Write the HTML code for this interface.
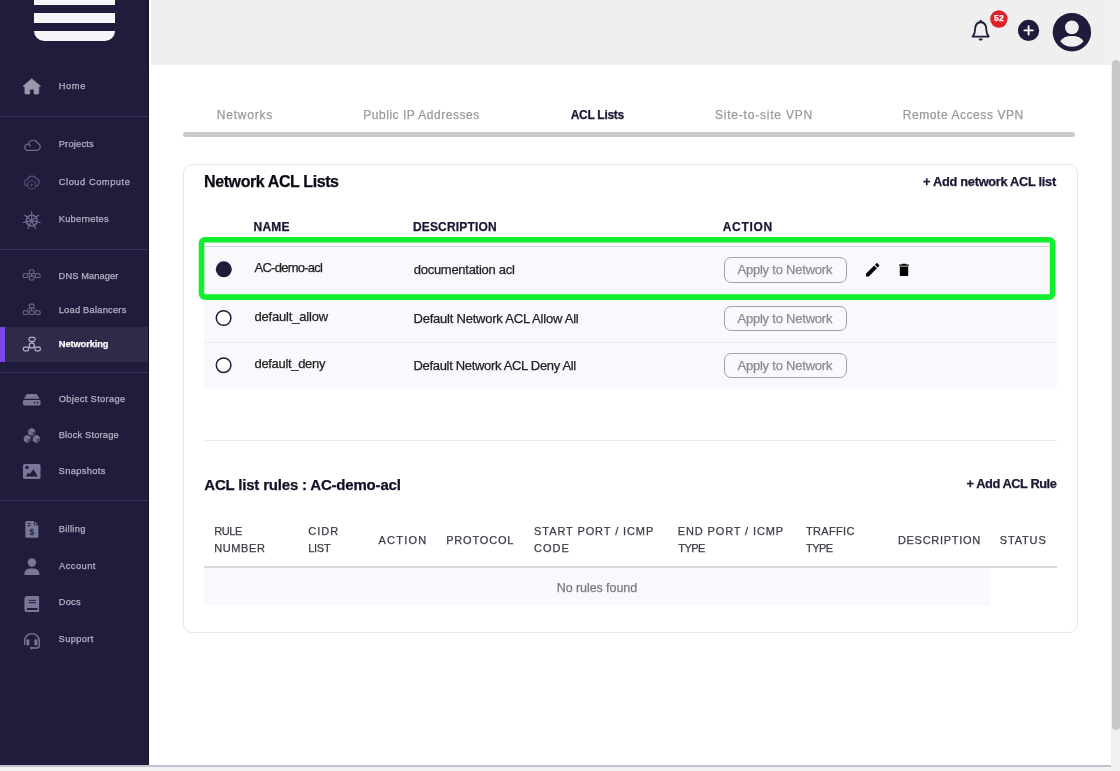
<!DOCTYPE html>
<html><head><meta charset="utf-8"><title>Network ACL Lists</title>
<style>
*{box-sizing:border-box;margin:0;padding:0}
html,body{width:1120px;height:771px;overflow:hidden;background:#fff;font-family:"Liberation Sans",sans-serif;color:#1f1b3a}
.a{position:absolute}
.t{position:absolute;white-space:nowrap;line-height:1.2;-webkit-text-stroke:.25px currentColor}
#txt{position:absolute;left:0;top:0;width:1120px;height:771px;will-change:transform}
.bl{display:inline-block;width:0;height:0}
#sidebar{left:0;top:0;width:149px;height:765px;background:#211c3b;box-shadow:inset -1px 0 0 #15112a}
#logo div{position:absolute;left:34px;width:81px;background:#f4f5f9}
.sep{position:absolute;left:0;width:148px;height:1px;background:#37325a}
#active{left:0;top:327px;width:148px;height:35px;background:#2d2a4a}
#active:before{content:"";position:absolute;left:0;top:0;width:5px;height:100%;background:#7a45e6}
#header{left:151px;top:0;width:969px;height:65px;background:#efefef}
#scroll{left:1111px;top:0;width:9px;height:771px;background:#f1f1f1}
#thumb{left:1112.3px;top:59.5px;width:8px;height:670px;border-radius:4px;background:#c8c8c8}
#bottom{left:0;top:765px;width:1111px;height:6px;background:#f2f2f0;border-top:2px solid #c2c1cf}
#tabline{left:183px;top:132px;width:892px;height:5px;border-radius:3px;background:#cacaca}
#card{left:183px;top:164px;width:895px;height:469px;border:1px solid #e6e6ea;border-radius:9px;background:#fff}
.row{position:absolute;left:204px;width:853px;background:#f8f8fd}
.btn{position:absolute;left:723.5px;width:123.5px;height:25px;border:1px solid #a2a2a2;border-radius:7px;background:transparent}
.radio{position:absolute;left:215.5px;width:16px;height:16px;border-radius:50%;border:1.7px solid #1f1b3a;background:#fff}
.radio.on{background:#1f1b3a}
svg{position:absolute;overflow:visible}
</style></head><body>
<div class="a" id="sidebar">
 <div id="logo">
  <div style="top:0;height:4.5px"></div>
  <div style="top:13px;height:9.5px"></div>
  <div style="top:31px;height:10px;border-radius:0 0 11px 11px"></div>
 </div>
 <div class="sep" style="top:116px"></div>
 <div class="sep" style="top:249px"></div>
 <div class="a" id="active"></div>
 <div class="sep" style="top:372px"></div>
 <div class="sep" style="top:499.5px"></div>
</div>
<div class="a" id="header"></div>
<div class="a" id="scroll"></div>
<div class="a" id="thumb"></div>
<div class="a" id="bottom"></div>
<div class="a" id="tabline"></div>
<div class="a" id="card"></div>

<div class="row" style="top:245.5px;height:48.5px;width:850px;border-top:1.5px solid #d0d0d6"></div>
<div class="row" style="top:294px;height:48px"></div>
<div class="row" style="top:342px;height:47px;border-top:1px solid #ebebf1"></div>
<svg style="left:0;top:0" width="1120" height="320" viewBox="0 0 1120 320"><rect x="201.5" y="239.7" width="851.1" height="57.4" rx="3.6" fill="none" stroke="#10ee2e" stroke-width="5.6"/></svg>

<div class="btn" style="top:257px;height:26px"></div>
<div class="btn" style="top:306px"></div>
<div class="btn" style="top:353px"></div>

<div class="a" style="left:204px;top:439.5px;width:853px;height:1px;background:#ececf0"></div>
<div class="a" style="left:204px;top:566px;width:853px;height:2px;background:#d9d9de"></div>
<div class="a" style="left:204px;top:568px;width:786.4px;height:38px;background:#f8f8fd"></div>
<svg style="left:0;top:0" width="1120" height="771" viewBox="0 0 1120 771">
<g fill="none" stroke="#1f1b3a" stroke-width="1.8" stroke-linejoin="round" stroke-linecap="round">
<path d="M972.6 36.6 L988.8 36.6 C987 34.5 986.3 32.5 986.3 29.5 C986.3 25.5 984.5 22.5 980.7 22 C976.9 22.5 975.1 25.5 975.1 29.5 C975.1 32.5 974.4 34.5 972.6 36.6 Z"/>
<path d="M980.7 22 L980.7 20.6"/></g>
<path d="M978.6 38.6 h4.2 a2.1 2.1 0 0 1 -4.2 0z" fill="#1f1b3a"/>
<circle cx="998.9" cy="19" r="8.7" fill="#e02029"/>
<circle cx="1028.6" cy="30.4" r="10.6" fill="#1f1b3a"/>
<path d="M1024.4 30.4h8.4M1028.6 26.2v8.4" stroke="#fff" stroke-width="1.9" stroke-linecap="round"/>
<circle cx="1071.9" cy="32.2" r="19.2" fill="#1f1b3a"/>
<circle cx="1071.9" cy="27.4" r="6.9" fill="#efefef"/>
<path d="M1060.3 41.5 C1062 37.8 1066.5 36 1071.9 36 C1077.3 36 1081.8 37.8 1083.5 41.5 C1080.5 45 1076.5 46.8 1071.9 46.8 C1067.3 46.8 1063.3 45 1060.3 41.5Z" fill="#efefef"/>
<path d="M31.8 78.7 L40.6 86.2 L38.8 87.1 V93.3 a.8 .8 0 0 1 -.8 .8 H34 V89.3 H29.8 V94.1 H25.7 a.8 .8 0 0 1 -.8 -.8 V87.1 L23 86.2 Z" fill="#9a98ac" stroke="#9a98ac" stroke-width=".6" stroke-linejoin="round"/>
<path d="M27 150.4 H36.7 A3.7 3.7 0 0 0 37.7 143.2 A5 5 0 0 0 28.3 144 A3.3 3.3 0 0 0 27 150.4 Z M28.3 144.1 A3.3 3.3 0 0 1 30.4 146.2" fill="none" stroke="#6f6c90" stroke-width="1.2" stroke-linejoin="round" stroke-linecap="round"/>
<path d="M27.6 186.1 A3.3 3.3 0 0 1 27.5 179.5 A4.9 4.9 0 0 1 36.6 178.9 A3.7 3.7 0 0 1 36 186.1" fill="none" stroke="#57537a" stroke-width="1.1" stroke-linecap="round"/>
<circle cx="31.6" cy="184.9" r="4.1" fill="#211c3b" stroke="#57537a" stroke-width="1"/>
<path d="M30 184.9h3.2M31.6 183.3v3.2" stroke="#57537a" stroke-width=".8"/>
<circle cx="31.7" cy="220.6" r="5.4" fill="none" stroke="#6f6c90" stroke-width="1.6"/>
<circle cx="31.7" cy="220.6" r="1.3" fill="#6f6c90"/>
<path d="M31.70 219.40L31.70 211.90M32.64 219.85L38.50 215.18M32.87 220.87L40.18 222.54M32.22 221.68L35.47 228.44M31.18 221.68L27.93 228.44M30.53 220.87L23.22 222.54M30.76 219.85L24.90 215.18" stroke="#6f6c90" stroke-width="1.2" stroke-linecap="round"/>
<rect x="29.20" y="270.00" width="4.8" height="3.8" rx="1.1" fill="none" stroke="#6f6c90" stroke-width="1.05"/>
<rect x="23.20" y="273.80" width="4.8" height="3.8" rx="1.1" fill="none" stroke="#6f6c90" stroke-width="1.05"/>
<rect x="35.30" y="273.80" width="4.8" height="3.8" rx="1.1" fill="none" stroke="#6f6c90" stroke-width="1.05"/>
<rect x="29.20" y="276.10" width="4.8" height="3.8" rx="1.1" fill="none" stroke="#6f6c90" stroke-width="1.05"/>
<path d="M31.6 273.8V276.1M29.6 273.6L28 274.6M33.6 273.6L35.3 274.6" stroke="#6f6c90" stroke-width="1" />
<rect x="29.20" y="304.10" width="4.8" height="3.8" rx="1.1" fill="none" stroke="#6f6c90" stroke-width="1.05"/>
<rect x="23.10" y="310.70" width="5" height="3.8" rx="1.6" fill="none" stroke="#6f6c90" stroke-width="1.05"/>
<rect x="29.10" y="310.70" width="5" height="3.8" rx="1.6" fill="none" stroke="#6f6c90" stroke-width="1.05"/>
<rect x="35.20" y="310.70" width="5" height="3.8" rx="1.6" fill="none" stroke="#6f6c90" stroke-width="1.05"/>
<path d="M31.6 307.9V310.7M30.2 307.9L26.6 310.7M33 307.9L36.7 310.7" stroke="#6f6c90" stroke-width="1"/>
<rect x="28.9" y="337.4" width="6.2" height="4" rx="1.8" fill="none" stroke="#b6b4d2" stroke-width="1.2"/>
<circle cx="31.8" cy="345.4" r="2.5" fill="none" stroke="#b6b4d2" stroke-width="1.2"/>
<rect x="23.4" y="347.2" width="5.3" height="3.6" rx="1.2" fill="none" stroke="#b6b4d2" stroke-width="1.2"/>
<rect x="35" y="347.2" width="5.3" height="3.6" rx="1.2" fill="none" stroke="#b6b4d2" stroke-width="1.2"/>
<path d="M31.9 341.6V342.8M29.7 346.8L28.6 347.5M33.9 346.8L35 347.5" stroke="#b6b4d2" stroke-width="1.2"/>
<path d="M27.3 394.1 H36.2 a1 1 0 0 1 .8 .5 L39.6 398.7 H23.9 L26.5 394.6 a1 1 0 0 1 .8 -.5Z" fill="#7a7798"/>
<rect x="23" y="399.9" width="17.5" height="5.5" rx="1.3" fill="#7a7798"/>
<circle cx="34.6" cy="402.6" r=".85" fill="#211c3b"/><circle cx="37.6" cy="402.6" r=".85" fill="#211c3b"/>
<polygon points="31.70,427.60 35.60,429.85 35.60,434.35 31.70,436.60 27.80,434.35 27.80,429.85" fill="#7a7798" stroke="#211c3b" stroke-width=".9" stroke-linejoin="round"/><polygon points="32.58,432.61 34.72,431.37 34.72,433.84 32.58,435.08" fill="#211c3b" opacity=".7"/><path d="M31.7 432.1L28.40 430.20M31.7 432.1V435.90" stroke="#211c3b" stroke-width=".5" opacity=".6"/>
<polygon points="27.20,434.40 31.10,436.65 31.10,441.15 27.20,443.40 23.30,441.15 23.30,436.65" fill="#7a7798" stroke="#211c3b" stroke-width=".9" stroke-linejoin="round"/><polygon points="28.08,439.41 30.22,438.17 30.22,440.64 28.08,441.88" fill="#211c3b" opacity=".7"/><path d="M27.2 438.9L23.90 437.00M27.2 438.9V442.70" stroke="#211c3b" stroke-width=".5" opacity=".6"/>
<polygon points="36.30,434.40 40.20,436.65 40.20,441.15 36.30,443.40 32.40,441.15 32.40,436.65" fill="#7a7798" stroke="#211c3b" stroke-width=".9" stroke-linejoin="round"/><polygon points="37.18,439.41 39.32,438.17 39.32,440.64 37.18,441.88" fill="#211c3b" opacity=".7"/><path d="M36.3 438.9L33.00 437.00M36.3 438.9V442.70" stroke="#211c3b" stroke-width=".5" opacity=".6"/>
<rect x="23" y="463.9" width="17.5" height="15.1" rx="1.8" fill="#7a7798"/>
<circle cx="27" cy="467.4" r="1.7" fill="#211c3b"/>
<path d="M25.7 476.4 L28.3 472.5 L29.6 474.3 L33.4 469.2 L37.9 476.4 Z" fill="#211c3b"/>
<path d="M26.8 520.9 H34.4 L38.4 524.9 V536.2 a1.5 1.5 0 0 1 -1.5 1.5 H26.8 a1.5 1.5 0 0 1 -1.5 -1.5 V522.4 a1.5 1.5 0 0 1 1.5 -1.5Z" fill="#7a7798"/>
<path d="M34.4 520.9 V524.9 H38.4" fill="none" stroke="#211c3b" stroke-width=".9"/>
<path d="M27.6 523.6h3M27.6 525.6h3" stroke="#211c3b" stroke-width=".9"/>
<text x="31.9" y="535.2" font-family="Liberation Sans, sans-serif" font-size="8.5" font-weight="bold" fill="#211c3b" text-anchor="middle">$</text>
<circle cx="31.9" cy="562.5" r="4.2" fill="#7a7798"/>
<path d="M24.4 575 V573.6 a5.2 5.2 0 0 1 5.2 -5.2 H34.2 a5.2 5.2 0 0 1 5.2 5.2 V575 Z" fill="#7a7798"/>
<path d="M27.6 595.9 H38.2 a.9 .9 0 0 1 .9 .9 V611.2 a.9 .9 0 0 1 -.9 .9 H27.6 a3.2 3.2 0 0 1 -3.2 -3.2 V599.1 a3.2 3.2 0 0 1 3.2 -3.2Z" fill="#7a7798"/>
<path d="M28.8 600.4H36M28.8 602.7H36" stroke="#211c3b" stroke-width="1"/>
<path d="M27.8 607.9 H37.6 V610.1 H27.8 a1.1 1.1 0 0 1 0 -2.2Z" fill="#211c3b"/>
<path d="M24.6 644.2 V640.9 a7.3 7.3 0 0 1 14.6 0 V645.4 a2.6 2.6 0 0 1 -2.6 2.6 H32.6" fill="none" stroke="#7a7798" stroke-width="1.4" stroke-linecap="round"/>
<rect x="26.4" y="639.2" width="2.9" height="6.3" rx="1.3" fill="#7a7798"/><rect x="34.5" y="639.2" width="2.9" height="6.3" rx="1.3" fill="#7a7798"/>
<circle cx="31.5" cy="648.1" r="1.4" fill="#7a7798"/>
<g transform="translate(863.78 260.9) scale(.74)" fill="#000"><path d="M3 17.25V21h3.75L17.81 9.94l-3.75-3.75L3 17.25zM20.71 7.04a.996.996 0 0 0 0-1.41l-2.34-2.34a.996.996 0 0 0-1.41 0l-1.83 1.83 3.75 3.75 1.83-1.83z"/></g>
<g transform="translate(895.6 261.65) scale(.70 .685)" fill="#000"><path d="M6 19c0 1.1.9 2 2 2h8c1.1 0 2-.9 2-2V7H6v12zM19 4h-3.5l-1-1h-5l-1 1H5v2h14V4z"/></g>
<circle cx="223.8" cy="269.3" r="8" fill="#1f1b3a"/>
<circle cx="223.6" cy="318" r="7.3" fill="#fff" stroke="#1f1b3a" stroke-width="1.5"/>
<circle cx="223.6" cy="365.2" r="7.3" fill="#fff" stroke="#1f1b3a" stroke-width="1.5"/>
</svg>
<div id="txt">
<div class="t" id="t0" style="left:58.7px;top:80.90px;font-size:9.3px;font-weight:normal;color:#b3b1c5;letter-spacing:0.649px;">Home</div>
<div class="t" id="t1" style="left:58.7px;top:139.30px;font-size:9.3px;font-weight:normal;color:#b3b1c5;letter-spacing:0.202px;">Projects</div>
<div class="t" id="t2" style="left:58.8px;top:176.80px;font-size:9.3px;font-weight:normal;color:#b3b1c5;letter-spacing:0.538px;">Cloud Compute</div>
<div class="t" id="t3" style="left:58.7px;top:214.20px;font-size:9.3px;font-weight:normal;color:#b3b1c5;letter-spacing:0.264px;">Kubernetes</div>
<div class="t" id="t4" style="left:58.6px;top:271.20px;font-size:9.3px;font-weight:normal;color:#b3b1c5;letter-spacing:0.087px;">DNS Manager</div>
<div class="t" id="t5" style="left:58.7px;top:305.00px;font-size:9.3px;font-weight:normal;color:#b3b1c5;letter-spacing:0.234px;">Load Balancers</div>
<div class="t" id="t6" style="left:58.8px;top:338.90px;font-size:9.3px;font-weight:bold;color:#ffffff;letter-spacing:-0.101px;">Networking</div>
<div class="t" id="t7" style="left:58.8px;top:394.20px;font-size:9.3px;font-weight:normal;color:#b3b1c5;letter-spacing:0.337px;">Object Storage</div>
<div class="t" id="t8" style="left:58.7px;top:430.00px;font-size:9.3px;font-weight:normal;color:#b3b1c5;letter-spacing:0.176px;">Block Storage</div>
<div class="t" id="t9" style="left:58.6px;top:466.20px;font-size:9.3px;font-weight:normal;color:#b3b1c5;letter-spacing:0.348px;">Snapshots</div>
<div class="t" id="t10" style="left:58.7px;top:523.80px;font-size:9.3px;font-weight:normal;color:#b3b1c5;letter-spacing:0.303px;">Billing</div>
<div class="t" id="t11" style="left:59.0px;top:560.90px;font-size:9.3px;font-weight:normal;color:#b3b1c5;letter-spacing:0.475px;">Account</div>
<div class="t" id="t12" style="left:58.7px;top:596.50px;font-size:9.3px;font-weight:normal;color:#b3b1c5;letter-spacing:0.262px;">Docs</div>
<div class="t" id="t13" style="left:58.6px;top:633.60px;font-size:9.3px;font-weight:normal;color:#b3b1c5;letter-spacing:0.364px;">Support</div>
<div class="t" id="t14" style="left:216.8px;top:108.00px;font-size:12px;font-weight:normal;color:#9a9a9a;letter-spacing:0.764px;">Networks</div>
<div class="t" id="t15" style="left:363.3px;top:108.00px;font-size:12px;font-weight:normal;color:#9a9a9a;letter-spacing:0.518px;">Public IP Addresses</div>
<div class="t" id="t16" style="left:570.7px;top:108.00px;font-size:12px;font-weight:bold;color:#1b1733;letter-spacing:-0.278px;">ACL Lists</div>
<div class="t" id="t17" style="left:715.0px;top:108.00px;font-size:12px;font-weight:normal;color:#9a9a9a;letter-spacing:0.785px;">Site-to-site VPN</div>
<div class="t" id="t18" style="left:902.7px;top:108.00px;font-size:12px;font-weight:normal;color:#9a9a9a;letter-spacing:0.574px;">Remote Access VPN</div>
<div class="t" id="t19" style="left:204.0px;top:171.70px;font-size:16px;font-weight:bold;color:#0c0b16;letter-spacing:-0.397px;">Network ACL Lists</div>
<div class="t" id="t20" style="left:923.1px;top:174.10px;font-size:12.8px;font-weight:bold;color:#1b1733;letter-spacing:-0.293px;">+ Add network ACL list</div>
<div class="t" id="t21" style="left:253.6px;top:219.80px;font-size:12px;font-weight:bold;color:#1b1733;letter-spacing:0.208px;">NAME</div>
<div class="t" id="t22" style="left:412.9px;top:219.80px;font-size:12px;font-weight:bold;color:#1b1733;letter-spacing:0.175px;">DESCRIPTION</div>
<div class="t" id="t23" style="left:722.7px;top:219.80px;font-size:12px;font-weight:bold;color:#1b1733;letter-spacing:0.697px;">ACTION</div>
<div class="t" id="t24" style="left:254.5px;top:260.30px;font-size:13px;font-weight:normal;color:#222;letter-spacing:-0.742px;">AC-demo-acl</div>
<div class="t" id="t25" style="left:413.8px;top:262.40px;font-size:13px;font-weight:normal;color:#222;letter-spacing:-0.279px;">documentation acl</div>
<div class="t" id="t26" style="left:254.5px;top:309.40px;font-size:13px;font-weight:normal;color:#222;letter-spacing:-0.188px;">default_allow</div>
<div class="t" id="t27" style="left:413.5px;top:311.20px;font-size:13px;font-weight:normal;color:#222;letter-spacing:-0.223px;">Default Network ACL Allow All</div>
<div class="t" id="t28" style="left:254.5px;top:356.20px;font-size:13px;font-weight:normal;color:#222;letter-spacing:-0.322px;">default_deny</div>
<div class="t" id="t29" style="left:413.5px;top:358.10px;font-size:13px;font-weight:normal;color:#222;letter-spacing:-0.323px;">Default Network ACL Deny All</div>
<div class="t" id="t30" style="left:737.5px;top:262.40px;font-size:13px;font-weight:normal;color:#8c8c8c;letter-spacing:-0.224px;">Apply to Network</div>
<div class="t" id="t31" style="left:737.5px;top:310.80px;font-size:13px;font-weight:normal;color:#8c8c8c;letter-spacing:-0.224px;">Apply to Network</div>
<div class="t" id="t32" style="left:737.5px;top:357.80px;font-size:13px;font-weight:normal;color:#8c8c8c;letter-spacing:-0.224px;">Apply to Network</div>
<div class="t" id="t33" style="left:204.3px;top:475.90px;font-size:15px;font-weight:bold;color:#120f26;letter-spacing:-0.190px;">ACL list rules : AC-demo-acl</div>
<div class="t" id="t34" style="left:966.5px;top:475.80px;font-size:12.8px;font-weight:bold;color:#1b1733;letter-spacing:-0.423px;">+ Add ACL Rule</div>
<div class="t" id="t35" style="left:214.2px;top:525.10px;font-size:11px;font-weight:normal;color:#3b3b46;letter-spacing:-0.386px;">RULE</div>
<div class="t" id="t36" style="left:214.2px;top:542.10px;font-size:11px;font-weight:normal;color:#3b3b46;letter-spacing:0.607px;">NUMBER</div>
<div class="t" id="t37" style="left:308.3px;top:525.10px;font-size:11px;font-weight:normal;color:#3b3b46;letter-spacing:0.979px;">CIDR</div>
<div class="t" id="t38" style="left:308.2px;top:542.10px;font-size:11px;font-weight:normal;color:#3b3b46;letter-spacing:-0.260px;">LIST</div>
<div class="t" id="t39" style="left:378.5px;top:533.60px;font-size:11px;font-weight:normal;color:#3b3b46;letter-spacing:1.235px;">ACTION</div>
<div class="t" id="t40" style="left:446.2px;top:533.60px;font-size:11px;font-weight:normal;color:#3b3b46;letter-spacing:0.809px;">PROTOCOL</div>
<div class="t" id="t41" style="left:534.1px;top:525.10px;font-size:11px;font-weight:normal;color:#3b3b46;letter-spacing:0.902px;">START PORT / ICMP</div>
<div class="t" id="t42" style="left:534.1px;top:542.10px;font-size:11px;font-weight:normal;color:#3b3b46;letter-spacing:0.983px;">CODE</div>
<div class="t" id="t43" style="left:677.7px;top:525.10px;font-size:11px;font-weight:normal;color:#3b3b46;letter-spacing:0.880px;">END PORT / ICMP</div>
<div class="t" id="t44" style="left:678.3px;top:542.10px;font-size:11px;font-weight:normal;color:#3b3b46;letter-spacing:-0.544px;">TYPE</div>
<div class="t" id="t45" style="left:806.0px;top:525.10px;font-size:11px;font-weight:normal;color:#3b3b46;letter-spacing:0.322px;">TRAFFIC</div>
<div class="t" id="t46" style="left:806.0px;top:542.10px;font-size:11px;font-weight:normal;color:#3b3b46;letter-spacing:-0.585px;">TYPE</div>
<div class="t" id="t47" style="left:897.9px;top:533.60px;font-size:11px;font-weight:normal;color:#3b3b46;letter-spacing:0.715px;">DESCRIPTION</div>
<div class="t" id="t48" style="left:999.7px;top:533.60px;font-size:11px;font-weight:normal;color:#3b3b46;letter-spacing:0.860px;">STATUS</div>
<div class="t" id="t49" style="left:556.7px;top:580.60px;font-size:12.5px;font-weight:normal;color:#7a7a7a;letter-spacing:-0.065px;">No rules found</div>
<div class="t" id="t50" style="left:993.9px;top:12.70px;font-size:8.5px;font-weight:bold;color:#ffffff;letter-spacing:0.473px;">52</div>
</div>
</body></html>
